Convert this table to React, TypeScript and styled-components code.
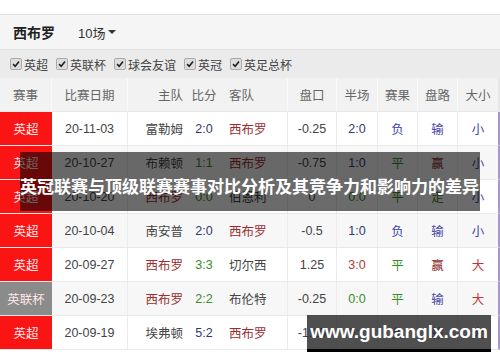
import React from 'react'
import styled, { createGlobalStyle } from 'styled-components'

const GlobalStyle = createGlobalStyle`
  html, body {
    margin: 0;
    padding: 0;
    background: #fff;
  }
  body {
    font-family: "Liberation Sans", "Noto Sans CJK SC", sans-serif;
    width: 500px;
    height: 362px;
    overflow: hidden;
  }
`

const Page = styled.div`
  position: relative;
  width: 500px;
  height: 362px;
  padding-top: 14px;
  box-sizing: border-box;
  background: #fff;
`

const TeamBar = styled.div`
  display: flex;
  align-items: center;
  gap: 23px;
  height: 35px;
  padding-left: 13px;
  background: #f5f5f5;
  border-top: 1px solid #e2e2e2;
  box-sizing: border-box;
`

const TeamName = styled.div`
  font-size: 14px;
  font-weight: bold;
  color: #222;
`

const RangeSelect = styled.div`
  display: flex;
  align-items: center;
  gap: 3px;
  font-size: 13px;
  color: #333;
`

const Caret = styled.span`
  width: 0;
  height: 0;
  border-left: 4px solid transparent;
  border-right: 4px solid transparent;
  border-top: 4px solid #333;
`

const FilterBar = styled.div`
  display: flex;
  align-items: center;
  gap: 8px;
  height: 29px;
  padding-left: 10px;
  background: #ebebeb;
  border-top: 1px solid #e0e0e0;
  box-sizing: border-box;
`

const Filter = styled.label`
  display: flex;
  align-items: center;
  gap: 2px;
  font-size: 12px;
  color: #444;
`

const Box = styled.span`
  display: flex;
  align-items: center;
  justify-content: center;
  width: 10px;
  height: 10px;
  border: 1px solid #aaa;
  border-radius: 2px;
  background: #ddd;
`

const Row = styled.div<{ $head?: boolean; $alt?: boolean }>`
  display: grid;
  grid-template-columns: 52px 76px 160px 49px 41px 40px 40px 40px;
  height: 34px;
  width: 500px;
  box-sizing: border-box;
  border-right: 2px solid ${({ $head }) => ($head ? '#e6e6e6' : '#a697d4')};
  border-bottom: 1px solid #e9e9e9;
  background: ${({ $head, $alt }) => ($head ? '#f2f2f2' : $alt ? '#f7f7f7' : '#fff')};
  font-size: 12.5px;
  color: ${({ $head }) => ($head ? '#666' : '#444')};
`

const Cell = styled.div<{ $head?: boolean }>`
  display: flex;
  align-items: center;
  justify-content: center;
  border-right: 1px solid ${({ $head }) => ($head ? '#fafafa' : '#ececec')};
  &:last-child {
    border-right: none;
  }
`

const League = styled(Cell)<{ $cup?: boolean }>`
  background: ${({ $cup }) => ($cup ? '#8b8b8b' : '#fa1414')};
  color: #fde8e8;
  border-right: none;
`

const Match = styled.div<{ $head?: boolean }>`
  display: grid;
  grid-template-columns: 55px 42px 63px;
  align-items: center;
  border-right: 1px solid ${({ $head }) => ($head ? '#fafafa' : '#ececec')};
`

const Home = styled.span<{ $us?: boolean }>`
  text-align: right;
  color: ${({ $us }) => ($us ? '#9a2d2d' : 'inherit')};
`

const Away = styled.span<{ $us?: boolean }>`
  padding-left: 4px;
  color: ${({ $us }) => ($us ? '#9a2d2d' : 'inherit')};
`

const Score = styled.span<{ $c?: string }>`
  text-align: center;
  color: ${({ $c }) => $c || 'inherit'};
`

const Mark = styled.span<{ $c: string }>`
  color: ${({ $c }) => $c};
`

const Banner = styled.div`
  position: absolute;
  left: 20px;
  top: 152px;
  width: 460px;
  height: 59px;
  background: rgba(0, 0, 0, 0.58);
  display: flex;
  align-items: flex-end;
  padding-bottom: 15px;
  box-sizing: border-box;
`

const BannerText = styled.div`
  font-family: "Noto Sans CJK SC", sans-serif;
  font-weight: bold;
  font-size: 17px;
  line-height: 20px;
  color: #fff;
  white-space: nowrap;
`

const Watermark = styled.div`
  position: absolute;
  left: 307px;
  top: 315px;
  width: 184px;
  height: 37px;
  background: rgba(40, 40, 40, 0.82);
  border-bottom: 3px solid #000;
  box-sizing: border-box;
  display: flex;
  align-items: center;
  justify-content: center;
  font-family: "Liberation Sans", sans-serif;
  font-weight: bold;
  font-size: 19px;
  color: #fff;
`

const C = {
  dark: '#2f3a6e',
  green: '#3a8a2e',
  red: '#b03a3a',
  blue: '#3c3fa8',
  brown: '#8e3030',
}

const rows = [
  ['英超', '20-11-03', '富勒姆', '2:0', '西布罗', '-0.25', '2:0', '负', '输', '小', C.dark, C.dark],
  ['英超', '20-10-27', '布赖顿', '1:1', '西布罗', '-0.75', '1:0', '平', '赢', '小', C.green, C.dark],
  ['英超', '20-10-20', '西布罗', '0:0', '伯恩利', '0', '0:0', '平', '走', '小', C.green, C.green],
  ['英超', '20-10-04', '南安普', '2:0', '西布罗', '-0.5', '1:0', '负', '输', '小', C.dark, C.dark],
  ['英超', '20-09-27', '西布罗', '3:3', '切尔西', '1.25', '3:0', '平', '赢', '大', C.green, C.red],
  ['英联杯', '20-09-23', '西布罗', '2:2', '布伦特', '-0.25', '0:0', '平', '输', '大', C.green, C.green],
  ['英超', '20-09-19', '埃弗顿', '5:2', '西布罗', '-1.25', '0:1', '负', '输', '大', C.dark, C.dark],
]

const resultColor = (r: string) => (r === '平' ? C.green : C.blue)
const panColor = (r: string) => (r === '赢' ? C.brown : r === '走' ? C.green : '#4a4aa8')
const sizeColor = (r: string) => (r === '大' ? '#c03535' : '#3c3fa8')

const filters = ['英超', '英联杯', '球会友谊', '英冠', '英足总杯']

const Tick = () => (
  <svg width="8" height="8" viewBox="0 0 8 8">
    <path d="M1 4.2 L3.2 6.3 L7 1.5" fill="none" stroke="#222" strokeWidth="1.6" />
  </svg>
)

const App = (): JSX.Element => {
  return (
    <Page>
      <GlobalStyle />
      <TeamBar>
        <TeamName>西布罗</TeamName>
        <RangeSelect>
          10场
          <Caret />
        </RangeSelect>
      </TeamBar>
      <FilterBar>
        {filters.map((f) => (
          <Filter key={f}>
            <Box>
              <Tick />
            </Box>
            {f}
          </Filter>
        ))}
      </FilterBar>
      <Row $head>
        <Cell $head>赛事</Cell>
        <Cell $head>比赛日期</Cell>
        <Match $head>
          <Home>主队</Home>
          <Score>比分</Score>
          <Away>客队</Away>
        </Match>
        <Cell $head>盘口</Cell>
        <Cell $head>半场</Cell>
        <Cell $head>赛果</Cell>
        <Cell $head>盘路</Cell>
        <Cell $head>大小</Cell>
      </Row>
      {rows.map((r, i) => (
        <Row key={r[1]} $alt={i % 2 === 1}>
          <League $cup={r[0] !== '英超'}>{r[0]}</League>
          <Cell>{r[1]}</Cell>
          <Match>
            <Home $us={r[2] === '西布罗'}>{r[2]}</Home>
            <Score $c={r[10]}>{r[3]}</Score>
            <Away $us={r[4] === '西布罗'}>{r[4]}</Away>
          </Match>
          <Cell>{r[5]}</Cell>
          <Cell>
            <Mark $c={r[11]}>{r[6]}</Mark>
          </Cell>
          <Cell>
            <Mark $c={resultColor(r[7])}>{r[7]}</Mark>
          </Cell>
          <Cell>
            <Mark $c={panColor(r[8])}>{r[8]}</Mark>
          </Cell>
          <Cell>
            <Mark $c={sizeColor(r[9])}>{r[9]}</Mark>
          </Cell>
        </Row>
      ))}
      <Banner>
        <BannerText>英冠联赛与顶级联赛赛事对比分析及其竞争力和影响力的差异</BannerText>
      </Banner>
      <Watermark>www.gubanglx.com</Watermark>
    </Page>
  )
}

export default App
